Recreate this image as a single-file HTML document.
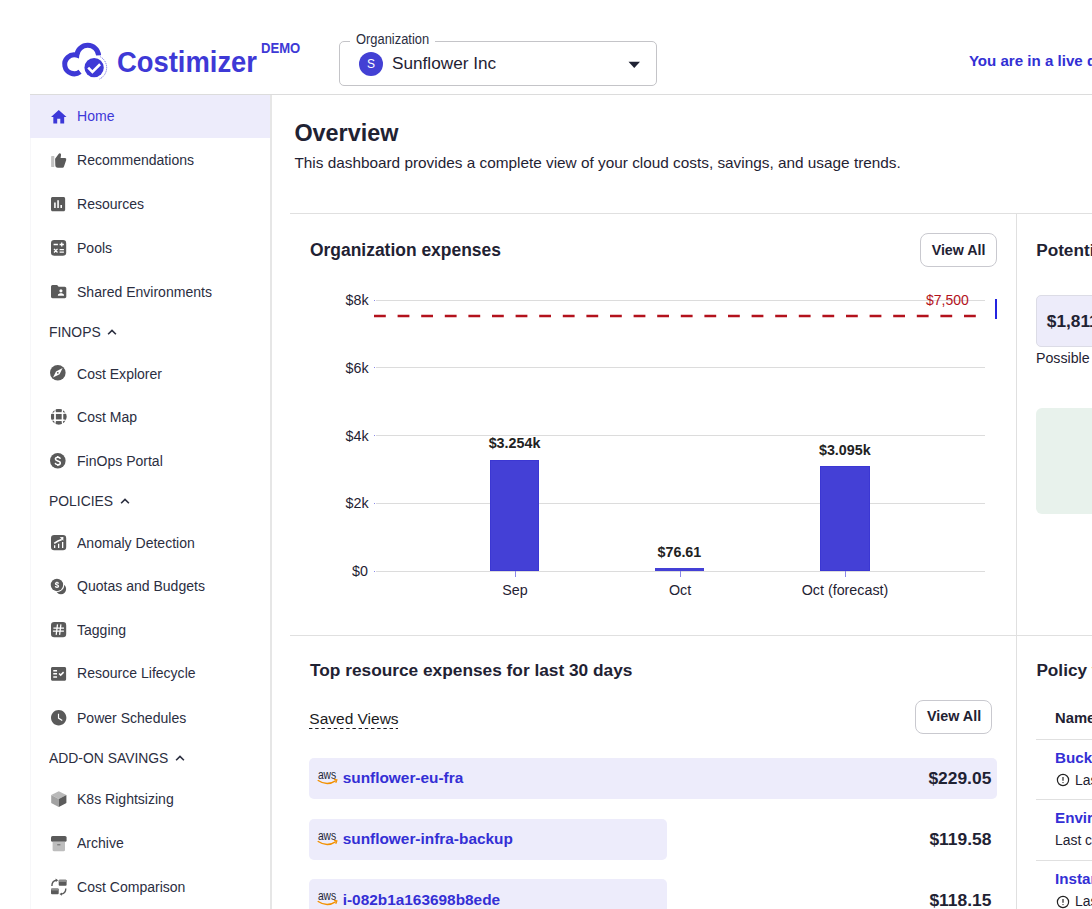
<!DOCTYPE html>
<html><head><meta charset="utf-8"><title>Costimizer</title>
<style>
html,body{margin:0;padding:0;background:#fff;}
body{width:1092px;height:909px;overflow:hidden;position:relative;font-family:"Liberation Sans",sans-serif;}
.t{position:absolute;line-height:0;white-space:nowrap;font-family:"Liberation Sans",sans-serif;}
svg{overflow:visible}
</style></head><body>
<div style="position:absolute;left:30px;top:94px;width:1062px;height:1px;background:#dcdcdc"></div>
<svg style="position:absolute;left:56px;top:36px" width="56" height="48" viewBox="0 0 56 48">
<path d="M24.05 35.79 A9.5 9.5 0 1 1 20.8 19.16 A10.96 10.96 0 0 1 42.62 19.35" fill="none" stroke="#3e39d6" stroke-width="5" stroke-linejoin="miter" stroke-miterlimit="10"/>
<circle cx="38.1" cy="31.7" r="9.67" fill="#3e39d6"/>
<path d="M44.4 20.8 A12.6 12.6 0 0 1 43.6 43.0" fill="none" stroke="#3e39d6" stroke-width="1.0" stroke-dasharray="1.0 1.0" opacity="0.8"/>
<path d="M32.2 31.7 L36.4 35.9 L44.1 28.3" fill="none" stroke="#fff" stroke-width="2.6"/>
</svg>
<div class="t" style="left:117.30px;transform:scaleX(0.9091);transform-origin:0 10.45px;top:61.88px;font-size:30.14px;font-weight:700;color:#3e39d6;">Costimizer</div>
<div class="t" style="left:261.00px;transform:scaleX(0.9524);transform-origin:0 4.77px;top:48.73px;font-size:13.76px;font-weight:700;color:#3e39d6;">DEMO</div>
<div style="position:absolute;left:339px;top:41px;width:316px;height:43px;border:1px solid #c4c4c8;border-radius:5px;"></div>
<div style="position:absolute;left:349.5px;top:36px;width:85px;height:10px;background:#fff"></div>
<div class="t" style="left:355.50px;transform:scaleX(0.9346);transform-origin:0 4.78px;top:39.72px;font-size:13.80px;font-weight:400;color:#2b2e3f;">Organization</div>
<div style="position:absolute;left:359px;top:52px;width:24px;height:24px;border-radius:50%;background:#4340d4;color:#fff;font-size:12px;line-height:24px;text-align:center;font-family:'Liberation Sans',sans-serif">S</div>
<div class="t" style="left:392.00px;transform:scaleX(1.0000);transform-origin:0 5.96px;top:63.01px;font-size:17.20px;font-weight:400;color:#1f2233;">Sunflower Inc</div>
<svg style="position:absolute;left:628px;top:60.5px" width="13" height="8" viewBox="0 0 13 8"><path d="M0.5 0.8 H12 L6.25 7 Z" fill="#1f2233"/></svg>
<div class="t" style="left:968.90px;transform:scaleX(1.0000);transform-origin:0 5.24px;top:60.99px;font-size:15.10px;font-weight:700;color:#3330d4;">You are in a live demo</div>
<div style="position:absolute;left:30px;top:95px;width:240px;height:43px;background:#edecfb"></div>
<div style="position:absolute;left:270px;top:95px;width:2px;height:814px;background:#e6e6e6"></div>
<div style="position:absolute;left:30px;top:138px;width:1px;height:771px;background:#f7f7f9"></div>
<div class="t" style="left:77.40px;transform:scaleX(0.9346);transform-origin:0 5.21px;top:116.01px;font-size:15.03px;font-weight:400;color:#3d38d8;">Home</div>
<svg style="position:absolute;left:50.6px;top:109.5px" width="17" height="17" viewBox="0 0 17 17"><path fill="#3d38d8" transform="translate(-1.55,-2.36) scale(0.775,0.788)" d="M10 20v-6h4v6h5v-8h3L12 3 2 12h3v8z"/></svg>
<div class="t" style="left:77.40px;transform:scaleX(0.9346);transform-origin:0 5.21px;top:160.01px;font-size:15.03px;font-weight:400;color:#2b2e3f;">Recommendations</div>
<svg style="position:absolute;left:50.6px;top:152.8px" width="17" height="17" viewBox="0 0 17 17"><rect x="0.1" y="3.1" width="3.2" height="10.8" rx="0.4" fill="#c2c2c2"/><path fill="#5a5a5a" d="M4.1 5.8 L7.6 0.9 Q8.5 -0.1 9.5 0.5 Q10.2 1.1 10.0 2.3 L9.6 5.0 L14.0 5.0 Q15.7 5.2 15.2 6.9 L13.0 13.5 Q12.6 14.7 11.5 14.7 L6.9 14.7 Q4.3 14.7 4.3 12.3 Z"/></svg>
<div class="t" style="left:77.40px;transform:scaleX(0.9346);transform-origin:0 5.21px;top:204.01px;font-size:15.03px;font-weight:400;color:#2b2e3f;">Resources</div>
<svg style="position:absolute;left:51.0px;top:197.3px" width="17" height="17" viewBox="0 0 17 17"><path fill="#5a5a5a" transform="translate(-2.355,-2.37) scale(0.785,0.79)" d="M19 3H5c-1.1 0-2 .9-2 2v14c0 1.1.9 2 2 2h14c1.1 0 2-.9 2-2V5c0-1.1-.9-2-2-2zM9 17H7v-7h2v7zm4 0h-2V7h2v10zm4 0h-2v-4h2v4z"/></svg>
<div class="t" style="left:77.40px;transform:scaleX(0.9346);transform-origin:0 5.21px;top:248.01px;font-size:15.03px;font-weight:400;color:#2b2e3f;">Pools</div>
<svg style="position:absolute;left:50.6px;top:240.0px" width="17" height="17" viewBox="0 0 17 17"><rect x="0" y="0" width="15.2" height="15.8" rx="3.2" fill="#5a5a5a"/><path stroke="#fff" stroke-width="1.35" fill="none" d="M2.6 4.5h4.3M8.6 4.5h4.3M10.75 2.4v4.2M3.0 8.9l3.5 3.6M6.5 8.9l-3.5 3.6M8.6 9.6h4.3M8.6 12.1h4.3"/></svg>
<div class="t" style="left:77.40px;transform:scaleX(0.9346);transform-origin:0 5.21px;top:292.01px;font-size:15.03px;font-weight:400;color:#2b2e3f;">Shared Environments</div>
<svg style="position:absolute;left:50.6px;top:285.0px" width="17" height="17" viewBox="0 0 17 17"><path fill="#5a5a5a" transform="translate(-1.53,-3.3) scale(0.765,0.825)" d="M20 6h-8l-2-2H4c-1.1 0-1.99.9-1.99 2L2 18c0 1.1.9 2 2 2h16c1.1 0 2-.9 2-2V8c0-1.1-.9-2-2-2zm-5 3c1.1 0 2 .9 2 2s-.9 2-2 2-2-.9-2-2 .9-2 2-2zm4 8h-8v-1c0-1.33 2.67-2 4-2s4 .67 4 2v1z"/></svg>
<div class="t" style="left:48.70px;transform:scaleX(0.9346);transform-origin:0 5.16px;top:332.02px;font-size:14.87px;font-weight:400;color:#2b2e3f;">FINOPS</div>
<svg style="position:absolute;left:106.8px;top:327.8px" width="10" height="8" viewBox="0 0 10 8"><path d="M1.1 6.3 L5 2.4 L8.9 6.3" fill="none" stroke="#2b2e3f" stroke-width="1.6"/></svg>
<div class="t" style="left:77.40px;transform:scaleX(0.9346);transform-origin:0 5.21px;top:374.01px;font-size:15.03px;font-weight:400;color:#2b2e3f;">Cost Explorer</div>
<svg style="position:absolute;left:50.2px;top:365.4px" width="17" height="17" viewBox="0 0 17 17"><circle cx="7.8" cy="7.8" r="7.8" fill="#5a5a5a"/><path fill="#fff" d="M3.0 12.6 L6.0 6.4 L12.6 3.0 L9.6 9.2z"/><circle cx="7.8" cy="7.8" r="0.9" fill="#5a5a5a"/></svg>
<div class="t" style="left:77.40px;transform:scaleX(0.9346);transform-origin:0 5.21px;top:417.01px;font-size:15.03px;font-weight:400;color:#2b2e3f;">Cost Map</div>
<svg style="position:absolute;left:50.6px;top:409.4px" width="17" height="17" viewBox="0 0 17 17"><defs><clipPath id="gclip"><circle cx="7.75" cy="7.7" r="7.8"/></clipPath></defs><circle cx="7.75" cy="7.7" r="7.1" fill="none" stroke="#5a5a5a" stroke-width="1.4"/><g clip-path="url(#gclip)" fill="#5a5a5a"><rect x="4.75" y="0" width="6" height="3.35"/><rect x="4.75" y="12.05" width="6" height="3.6"/><rect x="0" y="4.85" width="3.25" height="5.7"/><rect x="12.25" y="4.85" width="3.4" height="5.7"/><rect x="4.75" y="4.85" width="6" height="5.7"/></g><g stroke="#fff" stroke-width="1.15"><path d="M4.0 -1V17M11.45 -1V17M-1 4.15H17M-1 11.2H17"/></g></svg>
<div class="t" style="left:77.40px;transform:scaleX(0.9346);transform-origin:0 5.21px;top:461.01px;font-size:15.03px;font-weight:400;color:#2b2e3f;">FinOps Portal</div>
<svg style="position:absolute;left:50.3px;top:452.8px" width="17" height="17" viewBox="0 0 17 17"><circle cx="7.8" cy="7.8" r="7.8" fill="#5a5a5a"/><path fill="none" stroke="#fff" stroke-width="1.5" d="M10.3 5.8C10.1 4.7 9.1 4.3 7.8 4.3C6.4 4.3 5.4 5 5.4 6.1C5.4 7.3 6.5 7.6 7.8 7.9C9.2 8.2 10.3 8.7 10.3 9.9C10.3 11.1 9.2 11.7 7.8 11.7C6.4 11.7 5.4 11.1 5.2 9.9M7.8 2.9V4.4M7.8 11.6V13.1"/></svg>
<div class="t" style="left:48.70px;transform:scaleX(0.9346);transform-origin:0 5.16px;top:501.02px;font-size:14.87px;font-weight:400;color:#2b2e3f;">POLICIES</div>
<svg style="position:absolute;left:119.7px;top:496.8px" width="10" height="8" viewBox="0 0 10 8"><path d="M1.1 6.3 L5 2.4 L8.9 6.3" fill="none" stroke="#2b2e3f" stroke-width="1.6"/></svg>
<div class="t" style="left:77.40px;transform:scaleX(0.9346);transform-origin:0 5.21px;top:543.01px;font-size:15.03px;font-weight:400;color:#2b2e3f;">Anomaly Detection</div>
<svg style="position:absolute;left:50.6px;top:535.0px" width="17" height="17" viewBox="0 0 17 17"><rect x="0" y="0" width="15.2" height="15.3" rx="3.2" fill="#5a5a5a"/><path fill="#fff" d="M3.0 10.3h1.3v2.6H3.0zM7.0 8.7h1.3v4.2H7.0zM11.0 6.9h1.3v6.0h-1.3z"/><path stroke="#fff" stroke-width="1.6" fill="none" d="M3.2 8.3 Q7 5.6 10.8 4.4"/><path fill="#fff" d="M8.7 2.3 L12.4 2.1 L12.3 5.8z"/></svg>
<div class="t" style="left:77.40px;transform:scaleX(0.9346);transform-origin:0 5.21px;top:586.01px;font-size:15.03px;font-weight:400;color:#2b2e3f;">Quotas and Budgets</div>
<svg style="position:absolute;left:50.6px;top:578.5px" width="17" height="17" viewBox="0 0 17 17"><circle cx="9.95" cy="9.95" r="5.2" fill="#5a5a5a"/><circle cx="5.95" cy="5.95" r="7.3" fill="#fff"/><circle cx="5.95" cy="5.95" r="6.2" fill="#5a5a5a"/><path transform="translate(1.11,0.99) scale(0.62)" fill="none" stroke="#fff" stroke-width="2.1" d="M10.3 5.8C10.1 4.7 9.1 4.3 7.8 4.3C6.4 4.3 5.4 5 5.4 6.1C5.4 7.3 6.5 7.6 7.8 7.9C9.2 8.2 10.3 8.7 10.3 9.9C10.3 11.1 9.2 11.7 7.8 11.7C6.4 11.7 5.4 11.1 5.2 9.9M7.8 2.9V4.4M7.8 11.6V13.1"/></svg>
<div class="t" style="left:77.40px;transform:scaleX(0.9346);transform-origin:0 5.21px;top:630.01px;font-size:15.03px;font-weight:400;color:#2b2e3f;">Tagging</div>
<svg style="position:absolute;left:50.6px;top:622.4px" width="17" height="17" viewBox="0 0 17 17"><rect x="0" y="0" width="15.2" height="15.2" rx="3.2" fill="#5a5a5a"/><path stroke="#fff" stroke-width="1.25" fill="none" d="M6.5 2.3L5.2 12.8M9.9 2.3L8.6 12.8M2.4 6.1H13.0M1.9 9.1H12.9"/></svg>
<div class="t" style="left:77.40px;transform:scaleX(0.9346);transform-origin:0 5.21px;top:673.01px;font-size:15.03px;font-weight:400;color:#2b2e3f;">Resource Lifecycle</div>
<svg style="position:absolute;left:50.8px;top:667.1px" width="17" height="17" viewBox="0 0 17 17"><path fill="#5a5a5a" transform="translate(-1.51,-2.28) scale(0.755,0.761)" d="M20 3H4c-1.1 0-2 .9-2 2v14c0 1.1.9 2 2 2h16c1.1 0 2-.9 2-2V5c0-1.1-.9-2-2-2zM10 17H5v-2h5v2zm0-4H5v-2h5v2zm0-4H5V7h5v2zm4.82 6L12 12.16l1.41-1.41 1.41 1.42L17.99 9l1.42 1.42L14.82 15z"/></svg>
<div class="t" style="left:77.40px;transform:scaleX(0.9346);transform-origin:0 5.21px;top:718.01px;font-size:15.03px;font-weight:400;color:#2b2e3f;">Power Schedules</div>
<svg style="position:absolute;left:50.8px;top:710.0px" width="17" height="17" viewBox="0 0 17 17"><path fill="#5a5a5a" transform="translate(-1.54,-1.54) scale(0.77,0.77)" d="M12 2C6.5 2 2 6.5 2 12s4.5 10 10 10 10-4.5 10-10S17.5 2 12 2zm4.2 14.2L11 13V7h1.5v5.2l4.5 2.7-.8 1.3z"/></svg>
<div class="t" style="left:48.70px;transform:scaleX(0.9346);transform-origin:0 5.16px;top:758.02px;font-size:14.87px;font-weight:400;color:#2b2e3f;">ADD-ON SAVINGS</div>
<svg style="position:absolute;left:175.1px;top:753.8px" width="10" height="8" viewBox="0 0 10 8"><path d="M1.1 6.3 L5 2.4 L8.9 6.3" fill="none" stroke="#2b2e3f" stroke-width="1.6"/></svg>
<div class="t" style="left:77.40px;transform:scaleX(0.9346);transform-origin:0 5.21px;top:799.01px;font-size:15.03px;font-weight:400;color:#2b2e3f;">K8s Rightsizing</div>
<svg style="position:absolute;left:50.6px;top:790.7px" width="17" height="17" viewBox="0 0 17 17"><path fill="#b9b9b9" d="M7.8 0.3 L15.4 4.1 L7.8 7.9 L0.2 4.1z"/><path fill="#a2a2a2" d="M0.2 4.1 L7.8 7.9 V15.9 L0.6 12.2 Q0.2 12 0.2 11.5z"/><path fill="#5c5c5c" d="M15.4 4.1 L7.8 7.9 V15.9 L15 12.2 Q15.4 12 15.4 11.5z"/></svg>
<div class="t" style="left:77.40px;transform:scaleX(0.9346);transform-origin:0 5.21px;top:843.01px;font-size:15.03px;font-weight:400;color:#2b2e3f;">Archive</div>
<svg style="position:absolute;left:50.6px;top:835.6px" width="17" height="17" viewBox="0 0 17 17"><rect x="0" y="0" width="15.6" height="5.8" rx="1.6" fill="#5a5a5a"/><path fill="#bdbdbd" d="M1.6 5.8h12.4v8.2c0 .7-.5 1.2-1.2 1.2H2.8c-.7 0-1.2-.5-1.2-1.2z"/><rect x="6.2" y="8.1" width="3.2" height="1.3" fill="#7a7a7a"/></svg>
<div class="t" style="left:77.40px;transform:scaleX(0.9346);transform-origin:0 5.21px;top:887.01px;font-size:15.03px;font-weight:400;color:#2b2e3f;">Cost Comparison</div>
<svg style="position:absolute;left:50.6px;top:878.7px" width="17" height="17" viewBox="0 0 17 17"><rect x="7.7" y="0.8" width="7.9" height="5.9" rx="1" fill="#5a5a5a"/><rect x="7.7" y="0.8" width="7.9" height="2.2" rx="1" fill="#8c8c8c"/><rect x="0" y="9.4" width="7.7" height="5.9" rx="1" fill="#5a5a5a"/><rect x="0" y="9.4" width="7.7" height="2.2" rx="1" fill="#8c8c8c"/><path stroke="#5a5a5a" stroke-width="1.4" fill="none" d="M0.9 6.9 Q0.9 2.2 5.3 1.3M14.8 9.4 Q14.8 14.2 10.4 15.1"/><path fill="#5a5a5a" d="M4.6 -0.4 L7.2 1.2 L4.9 2.9z M11.1 13.5 L8.5 15.1 L10.8 16.8z"/></svg>
<div class="t" style="left:294.40px;transform:scaleX(1.0000);transform-origin:0 8.11px;top:133.01px;font-size:23.40px;font-weight:700;color:#1f2233;">Overview</div>
<div class="t" style="left:294.40px;transform:scaleX(1.0000);transform-origin:0 5.32px;top:162.95px;font-size:15.35px;font-weight:400;color:#1f2233;">This dashboard provides a complete view of your cloud costs, savings, and usage trends.</div>
<div style="position:absolute;left:290px;top:213px;width:802px;height:1px;background:#e0e0e0"></div>
<div style="position:absolute;left:290px;top:635px;width:802px;height:1px;background:#e0e0e0"></div>
<div style="position:absolute;left:1016px;top:213px;width:1px;height:696px;background:#e0e0e0"></div>
<div class="t" style="left:310.00px;transform:scaleX(1.0000);transform-origin:0 6.05px;top:249.98px;font-size:17.45px;font-weight:700;color:#1f2233;">Organization expenses</div>
<div style="position:absolute;left:920px;top:233px;width:75px;height:32px;border:1px solid #c9c9cf;border-radius:8px;"></div>
<div class="t" style="left:958.60px;transform:translateX(-50%) scaleX(1.0000);transform-origin:50% 4.94px;top:249.98px;font-size:14.25px;font-weight:700;color:#1f2233;">View All</div>
<div style="position:absolute;left:376px;top:300px;width:609px;height:1px;background:#dcdcdc"></div>
<div style="position:absolute;left:374px;top:300px;width:1px;height:1px;background:#8b89e8"></div>
<div class="t" style="right:723.70px;transform:scaleX(0.9346);transform-origin:100% 5.30px;top:299.97px;font-size:15.30px;font-weight:400;color:#1f2233;">$8k</div>
<div style="position:absolute;left:376px;top:367px;width:609px;height:1px;background:#dcdcdc"></div>
<div style="position:absolute;left:374px;top:367px;width:1px;height:1px;background:#8b89e8"></div>
<div class="t" style="right:723.70px;transform:scaleX(0.9346);transform-origin:100% 5.30px;top:367.97px;font-size:15.30px;font-weight:400;color:#1f2233;">$6k</div>
<div style="position:absolute;left:376px;top:435px;width:609px;height:1px;background:#dcdcdc"></div>
<div style="position:absolute;left:374px;top:435px;width:1px;height:1px;background:#8b89e8"></div>
<div class="t" style="right:723.70px;transform:scaleX(0.9346);transform-origin:100% 5.30px;top:435.97px;font-size:15.30px;font-weight:400;color:#1f2233;">$4k</div>
<div style="position:absolute;left:376px;top:503px;width:609px;height:1px;background:#dcdcdc"></div>
<div style="position:absolute;left:374px;top:503px;width:1px;height:1px;background:#8b89e8"></div>
<div class="t" style="right:723.70px;transform:scaleX(0.9346);transform-origin:100% 5.30px;top:502.97px;font-size:15.30px;font-weight:400;color:#1f2233;">$2k</div>
<div style="position:absolute;left:376px;top:571px;width:609px;height:1px;background:#dcdcdc"></div>
<div style="position:absolute;left:374px;top:571px;width:1px;height:1px;background:#8b89e8"></div>
<div class="t" style="right:723.70px;transform:scaleX(0.9346);transform-origin:100% 5.30px;top:570.97px;font-size:15.30px;font-weight:400;color:#1f2233;">$0</div>
<svg style="position:absolute;left:374px;top:313px" width="612" height="6"><line x1="0" y1="3" x2="612" y2="3" stroke="#b3121c" stroke-width="2.6" stroke-dasharray="11.8 11.8"/></svg>
<div class="t" style="right:123.00px;transform:scaleX(0.9346);transform-origin:100% 5.19px;top:299.98px;font-size:14.98px;font-weight:400;color:#b3121c;">$7,500</div>
<div style="position:absolute;left:995px;top:299px;width:2px;height:20px;background:#2424e0"></div>
<div style="position:absolute;left:490px;top:460px;width:49px;height:111px;background:#4440d6;box-shadow:inset 0 0 0 1px #3b37d3"></div>
<div style="position:absolute;left:655px;top:568px;width:49px;height:3px;background:#4440d6"></div>
<div style="position:absolute;left:820px;top:466px;width:50px;height:105px;background:#4440d6;box-shadow:inset 0 0 0 1px #3b37d3"></div>
<div style="position:absolute;left:515px;top:571px;width:1px;height:6px;background:#8b89e8"></div>
<div style="position:absolute;left:680px;top:571px;width:1px;height:6px;background:#8b89e8"></div>
<div style="position:absolute;left:845px;top:571px;width:1px;height:6px;background:#8b89e8"></div>
<div class="t" style="left:514.50px;transform:translateX(-50%) scaleX(1.0000);transform-origin:50% 4.96px;top:443.02px;font-size:14.30px;font-weight:700;color:#222;">$3.254k</div>
<div class="t" style="left:679.40px;transform:translateX(-50%) scaleX(1.0000);transform-origin:50% 4.96px;top:552.02px;font-size:14.30px;font-weight:700;color:#222;">$76.61</div>
<div class="t" style="left:844.80px;transform:translateX(-50%) scaleX(1.0000);transform-origin:50% 4.96px;top:450.02px;font-size:14.30px;font-weight:700;color:#222;">$3.095k</div>
<div class="t" style="left:514.80px;transform:translateX(-50%) scaleX(0.9346);transform-origin:50% 5.30px;top:589.97px;font-size:15.30px;font-weight:400;color:#1f2233;">Sep</div>
<div class="t" style="left:679.80px;transform:translateX(-50%) scaleX(0.9346);transform-origin:50% 5.30px;top:589.97px;font-size:15.30px;font-weight:400;color:#1f2233;">Oct</div>
<div class="t" style="left:844.70px;transform:translateX(-50%) scaleX(0.9346);transform-origin:50% 5.30px;top:589.97px;font-size:15.30px;font-weight:400;color:#1f2233;">Oct (forecast)</div>
<div class="t" style="left:310.00px;transform:scaleX(1.0000);transform-origin:0 6.00px;top:669.98px;font-size:17.30px;font-weight:700;color:#1f2233;">Top resource expenses for last 30 days</div>
<div class="t" style="left:309.30px;transform:scaleX(1.0000);transform-origin:0 5.37px;top:718.93px;font-size:15.50px;font-weight:400;color:#1b1b22;">Saved Views</div>
<svg style="position:absolute;left:309.1px;top:728px" width="89" height="1"><line x1="0" y1="0.5" x2="89" y2="0.5" stroke="#1b1b22" stroke-width="1.1" stroke-dasharray="3.4 2.8"/></svg>
<div style="position:absolute;left:915px;top:700px;width:75px;height:32px;border:1px solid #c9c9cf;border-radius:8px;"></div>
<div class="t" style="left:954.10px;transform:translateX(-50%) scaleX(1.0000);transform-origin:50% 4.96px;top:716.02px;font-size:14.30px;font-weight:700;color:#1f2233;">View All</div>
<div style="position:absolute;left:309px;top:757.5px;width:688px;height:41.5px;background:#edecfb;border-radius:5px"></div>
<svg style="position:absolute;left:317px;top:769.5px" width="21" height="16" viewBox="0 0 21 16"><text x="0.9" y="8.5" font-size="12.3" fill="#1f2937" textLength="18.3" lengthAdjust="spacingAndGlyphs" font-family="Liberation Sans">aws</text><path d="M0.7 10.3 Q10 16.6 18.9 10.6" fill="none" stroke="#f29100" stroke-width="1.35"/><path d="M16.9 9.2 L19.9 9.9 L18.8 12.9" fill="none" stroke="#f29100" stroke-width="1.2"/></svg>
<div class="t" style="left:342.70px;transform:scaleX(1.0000);transform-origin:0 5.34px;top:777.94px;font-size:15.40px;font-weight:700;color:#342fd5;">sunflower-eu-fra</div>
<div class="t" style="right:100.70px;transform:scaleX(1.0000);transform-origin:100% 6.03px;top:777.99px;font-size:17.40px;font-weight:700;color:#1f2233;">$229.05</div>
<div style="position:absolute;left:309px;top:818.5px;width:358px;height:41.5px;background:#edecfb;border-radius:5px"></div>
<svg style="position:absolute;left:317px;top:830.5px" width="21" height="16" viewBox="0 0 21 16"><text x="0.9" y="8.5" font-size="12.3" fill="#1f2937" textLength="18.3" lengthAdjust="spacingAndGlyphs" font-family="Liberation Sans">aws</text><path d="M0.7 10.3 Q10 16.6 18.9 10.6" fill="none" stroke="#f29100" stroke-width="1.35"/><path d="M16.9 9.2 L19.9 9.9 L18.8 12.9" fill="none" stroke="#f29100" stroke-width="1.2"/></svg>
<div class="t" style="left:342.70px;transform:scaleX(1.0000);transform-origin:0 5.34px;top:838.94px;font-size:15.40px;font-weight:700;color:#342fd5;">sunflower-infra-backup</div>
<div class="t" style="right:100.70px;transform:scaleX(1.0000);transform-origin:100% 6.03px;top:838.99px;font-size:17.40px;font-weight:700;color:#1f2233;">$119.58</div>
<div style="position:absolute;left:309px;top:879.0px;width:358px;height:41.5px;background:#edecfb;border-radius:5px"></div>
<svg style="position:absolute;left:317px;top:891.0px" width="21" height="16" viewBox="0 0 21 16"><text x="0.9" y="8.5" font-size="12.3" fill="#1f2937" textLength="18.3" lengthAdjust="spacingAndGlyphs" font-family="Liberation Sans">aws</text><path d="M0.7 10.3 Q10 16.6 18.9 10.6" fill="none" stroke="#f29100" stroke-width="1.35"/><path d="M16.9 9.2 L19.9 9.9 L18.8 12.9" fill="none" stroke="#f29100" stroke-width="1.2"/></svg>
<div class="t" style="left:342.70px;transform:scaleX(1.0000);transform-origin:0 5.34px;top:899.94px;font-size:15.40px;font-weight:700;color:#342fd5;">i-082b1a163698b8ede</div>
<div class="t" style="right:100.70px;transform:scaleX(1.0000);transform-origin:100% 6.03px;top:899.99px;font-size:17.40px;font-weight:700;color:#1f2233;">$118.15</div>
<div class="t" style="left:1036.20px;transform:scaleX(1.0000);transform-origin:0 5.96px;top:250.01px;font-size:17.20px;font-weight:700;color:#1f2233;">Potential savings</div>
<div style="position:absolute;left:1036px;top:295px;width:120px;height:50px;background:#edecfa;border:1px solid #dcdce6;border-radius:5px"></div>
<div class="t" style="left:1046.80px;transform:scaleX(1.0000);transform-origin:0 6.00px;top:320.98px;font-size:17.30px;font-weight:700;color:#1f2233;">$1,811</div>
<div class="t" style="left:1036.20px;transform:scaleX(0.9346);transform-origin:0 5.27px;top:357.98px;font-size:15.19px;font-weight:400;color:#1f2233;">Possible monthly savings</div>
<div style="position:absolute;left:1036px;top:408px;width:120px;height:105.5px;background:#e8f2ec;border-radius:6px"></div>
<div class="t" style="left:1036.40px;transform:scaleX(1.0000);transform-origin:0 5.96px;top:670.01px;font-size:17.20px;font-weight:700;color:#1f2233;">Policy violations</div>
<div class="t" style="left:1055.00px;transform:scaleX(1.0000);transform-origin:0 5.13px;top:717.99px;font-size:14.80px;font-weight:700;color:#1f2233;">Name</div>
<div style="position:absolute;left:1036px;top:739px;width:56px;height:1px;background:#e0e0e0"></div>
<div style="position:absolute;left:1036px;top:799px;width:56px;height:1px;background:#e0e0e0"></div>
<div style="position:absolute;left:1036px;top:860px;width:56px;height:1px;background:#e0e0e0"></div>
<div class="t" style="left:1055.00px;transform:scaleX(1.0000);transform-origin:0 5.27px;top:757.98px;font-size:15.20px;font-weight:700;color:#342fd5;">Bucket policy</div>
<div class="t" style="left:1055.00px;transform:scaleX(1.0000);transform-origin:0 5.27px;top:817.98px;font-size:15.20px;font-weight:700;color:#342fd5;">Environment</div>
<div class="t" style="left:1055.00px;transform:scaleX(1.0000);transform-origin:0 5.27px;top:878.98px;font-size:15.20px;font-weight:700;color:#342fd5;">Instances</div>
<svg style="position:absolute;left:1055.5px;top:773.2px" width="14" height="14" viewBox="0 0 14 14"><circle cx="7" cy="7" r="5.6" fill="none" stroke="#222" stroke-width="1.2"/><path d="M7 4.1v3.6" stroke="#222" stroke-width="1.2"/><circle cx="7" cy="9.6" r="0.7" fill="#222"/></svg>
<div class="t" style="left:1075.00px;transform:scaleX(0.9346);transform-origin:0 5.16px;top:780.02px;font-size:14.87px;font-weight:400;color:#1f2233;">Last check</div>
<div class="t" style="left:1055.30px;transform:scaleX(0.9346);transform-origin:0 5.16px;top:840.02px;font-size:14.87px;font-weight:400;color:#1f2233;">Last check</div>
<svg style="position:absolute;left:1055.5px;top:894.9px" width="14" height="14" viewBox="0 0 14 14"><circle cx="7" cy="7" r="5.6" fill="none" stroke="#222" stroke-width="1.2"/><path d="M7 4.1v3.6" stroke="#222" stroke-width="1.2"/><circle cx="7" cy="9.6" r="0.7" fill="#222"/></svg>
<div class="t" style="left:1075.00px;transform:scaleX(0.9346);transform-origin:0 5.16px;top:901.02px;font-size:14.87px;font-weight:400;color:#1f2233;">Last check</div>
</body></html>
